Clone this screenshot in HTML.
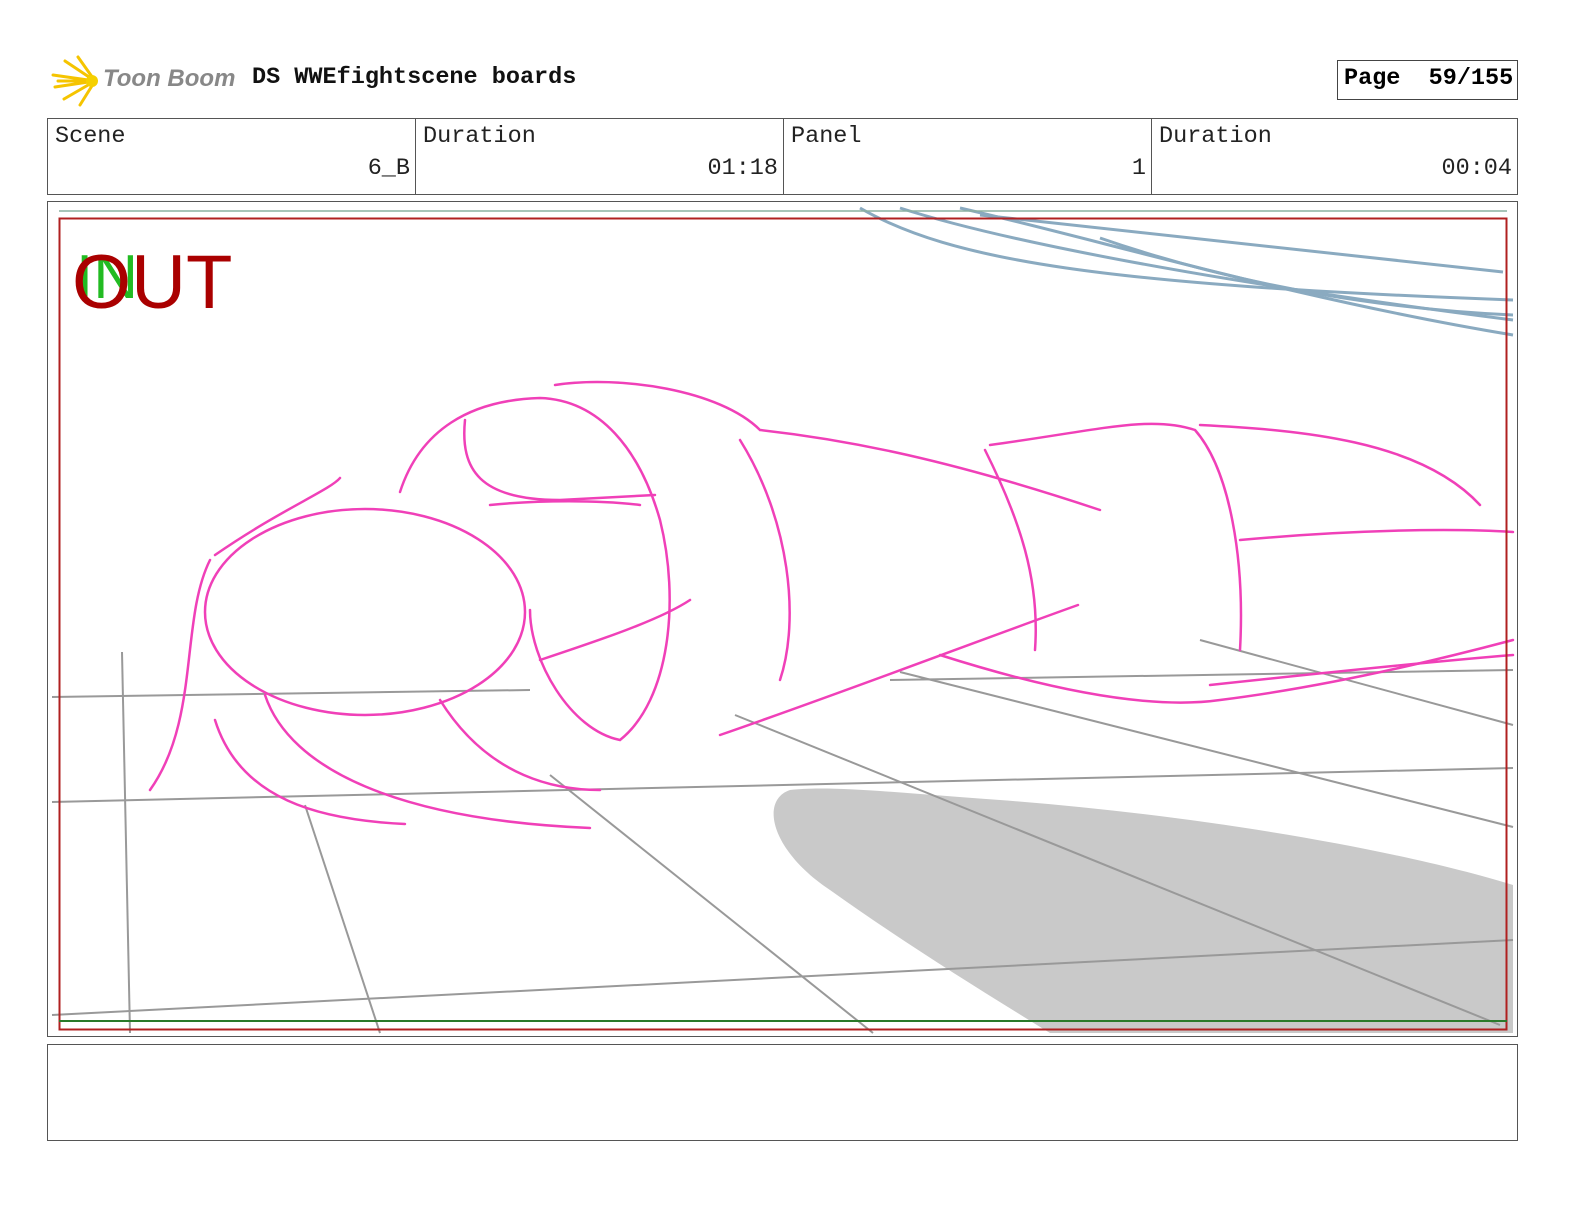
<!DOCTYPE html>
<html><head><meta charset="utf-8"><style>
body{margin:0;background:#fff;width:1584px;height:1224px;position:relative;overflow:hidden;font-family:"Liberation Mono",monospace}
.a{position:absolute;white-space:nowrap}
.cell{position:absolute;top:118px;height:77px;border:1px solid #555;box-sizing:border-box;font-size:23.5px;color:#222}
.cell .l{position:absolute;left:7px;top:4px}
.cell .v{position:absolute;right:5px;top:36px}
</style></head><body>
<svg class="a" style="left:50px;top:55px" width="55" height="52" viewBox="0 0 55 52">
<g stroke="#f5c400" stroke-width="3" stroke-linecap="round">
<line x1="45" y1="26" x2="3" y2="20"/><line x1="45" y1="26" x2="5" y2="32"/><line x1="45" y1="26" x2="15" y2="6"/><line x1="45" y1="26" x2="28" y2="2"/><line x1="45" y1="26" x2="14" y2="44"/><line x1="45" y1="26" x2="30" y2="50"/><line x1="45" y1="26" x2="8" y2="26"/></g>
<circle cx="42" cy="26" r="6" fill="#f5d000"/></svg>
<div class="a" style="left:103px;top:65px;font-family:'Liberation Sans',sans-serif;font-style:italic;font-weight:bold;font-size:24px;color:#888">Toon Boom</div>
<div class="a" style="left:252px;top:64px;font-weight:bold;font-size:23.5px;color:#111">DS WWEfightscene boards</div>
<div class="a" style="left:1337px;top:60px;width:181px;height:40px;border:1px solid #444;box-sizing:border-box;font-weight:bold;font-size:23.5px;padding:4px 0 0 6px">Page&nbsp; 59/155</div>
<div class="cell" style="left:47px;width:369px"><span class="l">Scene</span><span class="v">6_B</span></div>
<div class="cell" style="left:415px;width:369px"><span class="l">Duration</span><span class="v">01:18</span></div>
<div class="cell" style="left:783px;width:369px"><span class="l">Panel</span><span class="v">1</span></div>
<div class="cell" style="left:1151px;width:367px"><span class="l">Duration</span><span class="v">00:04</span></div>
<div class="a" style="left:47px;top:201px;width:1471px;height:836px;border:1px solid #555;box-sizing:border-box"></div>
<div class="a" style="left:47px;top:1044px;width:1471px;height:97px;border:1px solid #555;box-sizing:border-box"></div>
<svg class="a" style="left:0;top:0" width="1584" height="1224" viewBox="0 0 1584 1224" fill="none">
<path d="M790 790 C760 800 770 850 830 890 C900 940 980 990 1050 1033 L1513 1033 L1513 885 C1400 850 1200 815 1000 800 C900 793 830 785 790 790Z" fill="#c9c9c9"/>
<g stroke="#999" stroke-width="2">
<path d="M52 697 L530 690"/><path d="M890 680 L1513 670"/><path d="M52 802 L1513 768"/><path d="M52 1015 L1513 940"/>
<path d="M122 652 L130 1033"/><path d="M305 805 L380 1033"/><path d="M550 775 L873 1033"/>
<path d="M735 715 L1500 1025"/><path d="M900 672 L1513 827"/><path d="M1200 640 L1513 725"/></g>
<g stroke="#8aaac0" stroke-width="3">
<path d="M860 208 C950 260 1100 285 1513 300"/><path d="M900 208 C1000 240 1200 280 1513 320"/><path d="M960 208 C1100 240 1300 300 1513 335"/><path d="M980 215 C1200 240 1400 260 1503 272"/><path d="M1100 238 C1250 290 1400 310 1513 315"/></g>
<g stroke="#f040b8" stroke-width="2.5" stroke-linecap="round">
<ellipse cx="365" cy="612" rx="160" ry="103"/>
<path d="M210 560 C180 620 200 720 150 790"/><path d="M215 720 C240 800 320 820 405 824"/><path d="M265 695 C290 770 400 820 590 828"/>
<path d="M215 555 C280 510 330 490 340 478"/><path d="M440 700 C490 780 560 790 600 790"/>
<path d="M400 492 C420 430 470 400 540 398 C600 400 640 450 660 520 C680 600 670 700 620 740 C570 730 530 660 530 610"/>
<path d="M465 420 C460 470 480 500 560 500 L655 495"/><path d="M490 505 C540 500 600 500 640 505"/>
<path d="M555 385 C620 375 720 390 760 430 C850 440 950 460 1100 510"/>
<path d="M740 440 C790 520 800 620 780 680"/><path d="M985 450 C1020 520 1040 580 1035 650"/>
<path d="M990 445 C1100 430 1150 415 1195 430 C1230 470 1245 560 1240 650"/>
<path d="M1200 425 C1300 430 1420 440 1480 505"/><path d="M1240 540 C1350 530 1450 528 1513 532"/>
<path d="M720 735 C850 690 980 640 1078 605"/><path d="M940 655 C1050 690 1150 710 1220 700 C1300 690 1400 670 1513 640"/>
<path d="M1210 685 C1350 670 1450 660 1513 655"/><path d="M540 660 C600 640 660 620 690 600"/>
</g>
<rect x="59.5" y="218.5" width="1447" height="811" stroke="#b02020" stroke-width="2"/>
<path d="M59 1021 L1507 1021" stroke="#2a7a2a" stroke-width="2"/>
<path d="M59 211 L1507 211" stroke="#8ab0a0" stroke-width="1.5"/>
<text x="76" y="298" font-family="Liberation Sans,sans-serif" font-size="62" fill="#22bb22">IN</text>
<text x="72" y="308" font-family="Liberation Sans,sans-serif" font-size="76" fill="#aa0000">OUT</text>
</svg>
</body></html>
